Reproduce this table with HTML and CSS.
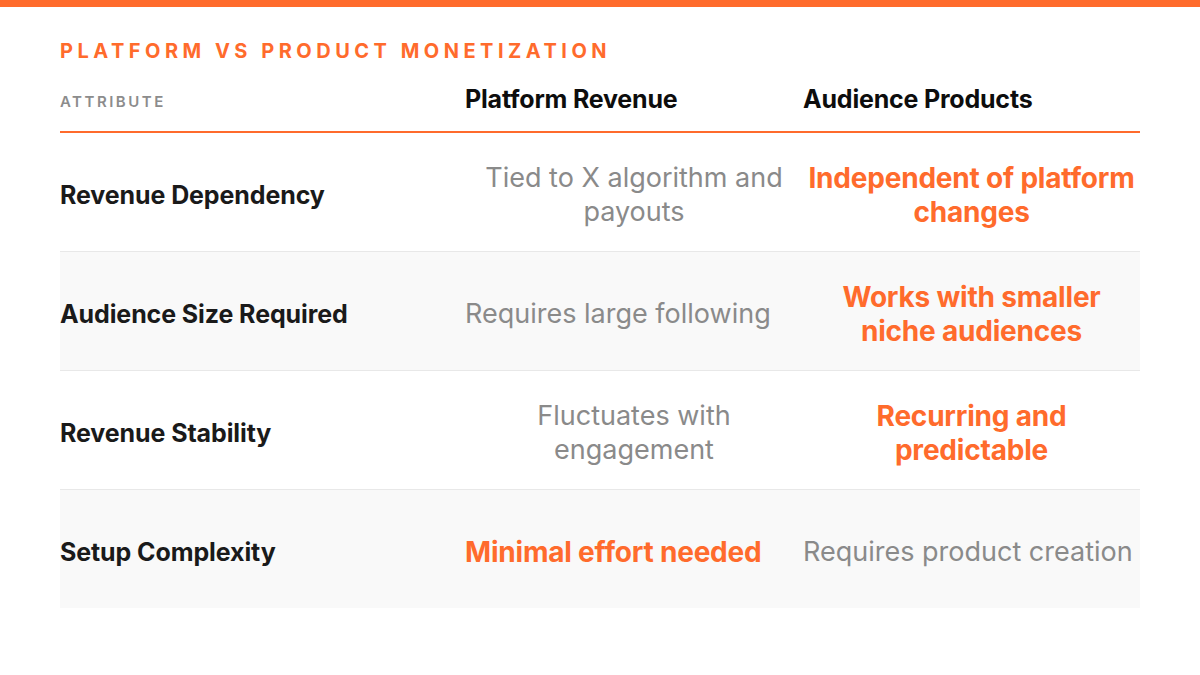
FILE: index.html
```html
<!DOCTYPE html>
<html>
<head>
<meta charset="utf-8">
<link rel="stylesheet" href="styles.css">
</head>
<body>
<div class="topbar"></div>
<main class="wrap">
  <h1 class="title">PLATFORM VS PRODUCT MONETIZATION</h1>
  <div class="table">
    <div class="row head">
      <div class="hcell attr">ATTRIBUTE</div>
      <div class="hcell">Platform Revenue</div>
      <div class="hcell">Audience Products</div>
    </div>
    <div class="row">
      <div class="label">Revenue Dependency</div>
      <div class="cell muted"><span>Tied to X algorithm and payouts</span></div>
      <div class="cell accent"><span>Independent of platform changes</span></div>
    </div>
    <div class="row shaded">
      <div class="label">Audience Size Required</div>
      <div class="cell muted"><span>Requires large following</span></div>
      <div class="cell accent"><span>Works with smaller niche audiences</span></div>
    </div>
    <div class="row">
      <div class="label">Revenue Stability</div>
      <div class="cell muted"><span>Fluctuates with engagement</span></div>
      <div class="cell accent"><span>Recurring and predictable</span></div>
    </div>
    <div class="row shaded last">
      <div class="label">Setup Complexity</div>
      <div class="cell accent"><span>Minimal effort needed</span></div>
      <div class="cell muted"><span>Requires product creation</span></div>
    </div>
  </div>
</main>
</body>
</html>
```
FILE: styles.css
```css
* { box-sizing: border-box; }
html, body { margin: 0; padding: 0; background: #ffffff; }
body { font-family: Inter, "Noto Sans", "Liberation Sans", sans-serif; color: #111; }

.topbar { height: 7px; background: #ff6b2c; }

.wrap { padding: 32px 60px 0; }

.title {
  margin: 0;
  font-size: 20px;
  line-height: 24px;
  font-weight: 700;
  letter-spacing: 4.5px;
  color: #ff6b2c;
}

.table { margin-top: 18px; width: 1080px; }

.row {
  display: grid;
  grid-template-columns: 405px 338px 337px;
  height: 119px;
  border-bottom: 1px solid #e8e8e8;
}
.row.last { border-bottom: none; height: 118px; }
.row.shaded { background: #f9f9f9; }

.row.head {
  height: 52px;
  border-bottom: 2px solid #ff6b2c;
  align-items: start;
}
.hcell {
  padding-top: 4px;
  font-size: 25px;
  line-height: 28px;
  font-weight: 700;
  letter-spacing: -0.2px;
  color: #0d0d0d;
}
.hcell.attr {
  padding-top: 7px;
  font-size: 15px;
  line-height: 28px;
  letter-spacing: 2.5px;
  color: #8c8c8c;
  font-weight: 600;
}

.label {
  display: flex;
  align-items: center;
  padding-top: 6px;
  font-size: 25px;
  font-weight: 700;
  letter-spacing: -0.1px;
  color: #1a1a1a;
}

.cell {
  display: flex;
  align-items: center;
  padding-top: 6px;
  text-align: center;
  font-size: 27px;
  line-height: 34px;
}
.cell.muted { color: #8a8a8a; font-weight: 400; }
.cell.accent { color: #ff6b2c; font-weight: 700; font-size: 28px; letter-spacing: -0.2px; }
```
